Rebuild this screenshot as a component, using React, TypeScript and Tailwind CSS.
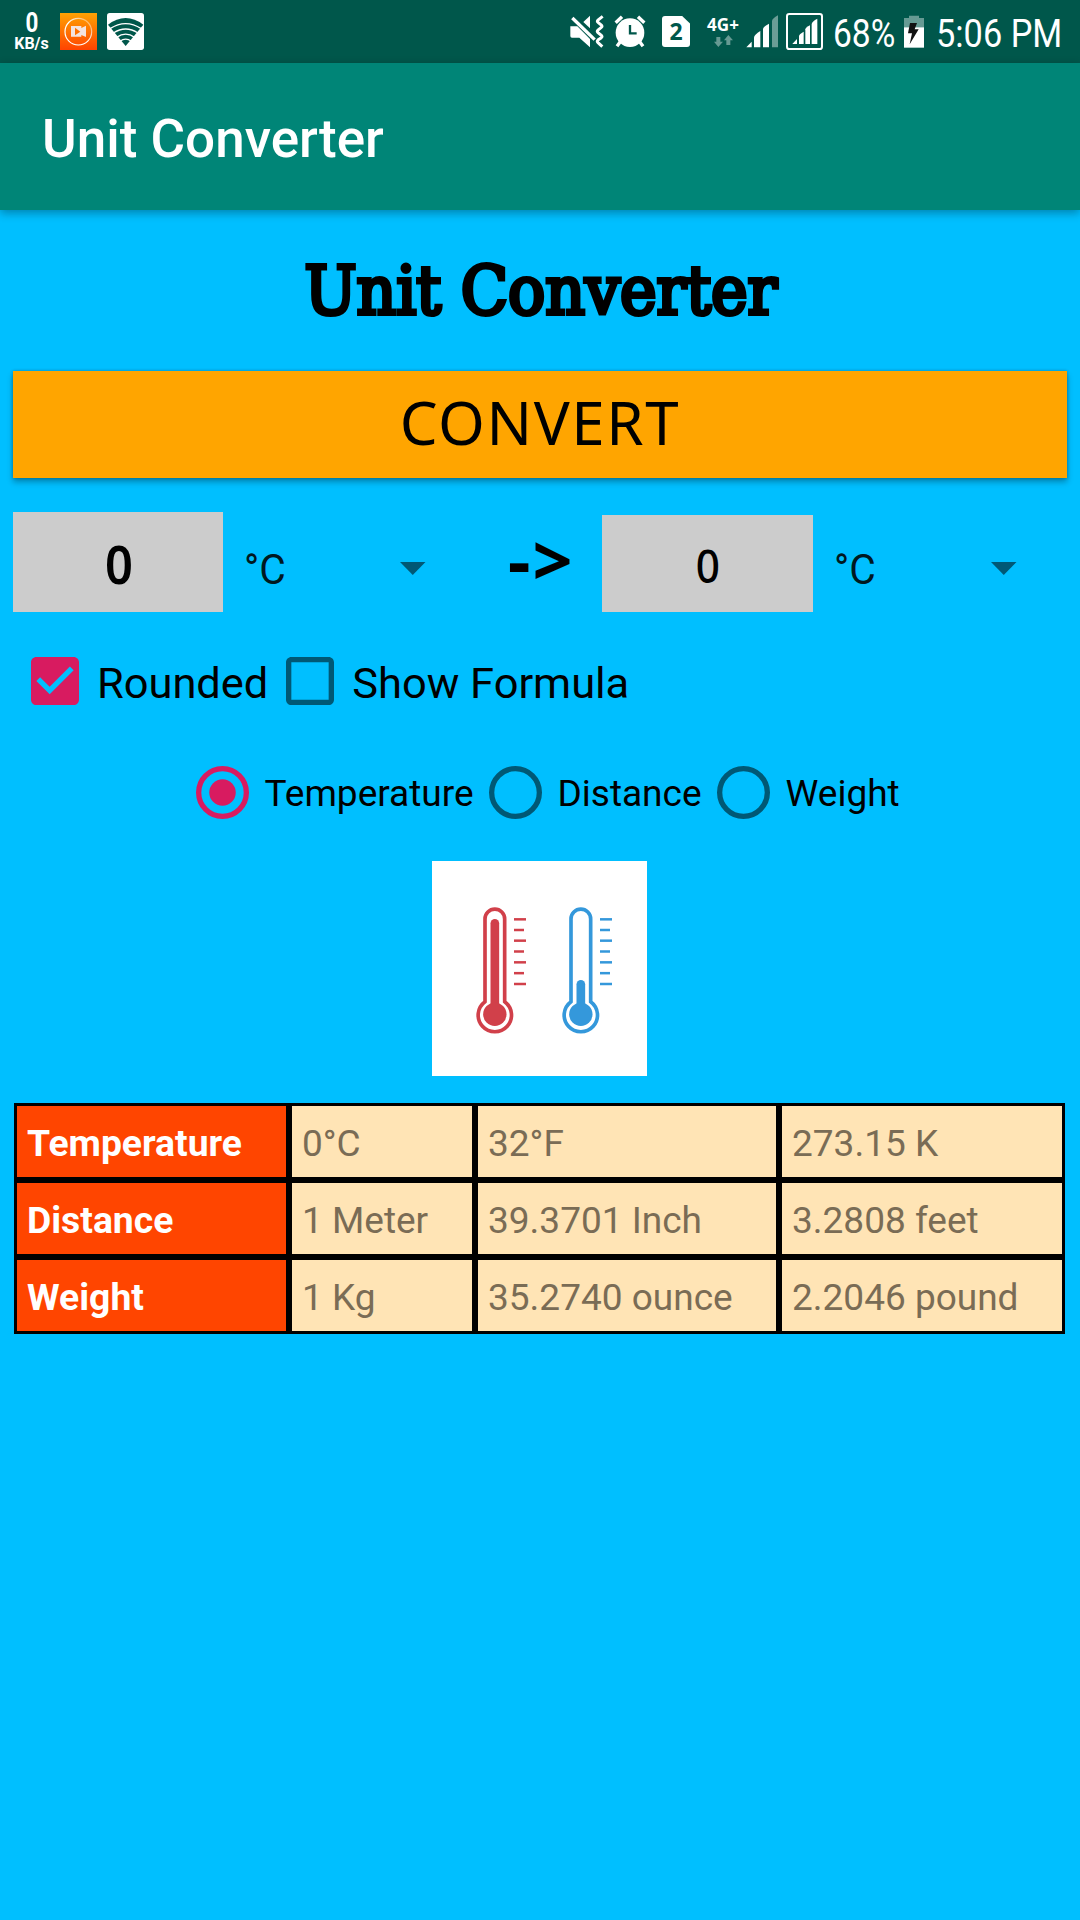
import type { ReactNode } from 'react';

function MuteIcon() {
  return (
    <svg className="h-[33px] w-[34px] shrink-0" viewBox="60 45 102 99">
      <path d="M100 66L120 47V85Z" fill="#fff" />
      <path d="M67 54L134 119" stroke="#fff" strokeWidth="10" />
      <path d="M61 79H82L120 117V142L88 113H66Q61 113 61 108Z" fill="#fff" />
      <path d="M158 49L144 60Q140 64 144 67L154 75Q158 79 154 82L144 90Q140 94 144 98L154 106Q158 110 154 113L144 120Q140 124 144 128L157 140" fill="none" stroke="#fff" strokeWidth="9" />
    </svg>
  );
}

function AlarmIcon() {
  return (
    <svg className="h-[33px] w-[32px] shrink-0" viewBox="192 45 96 99">
      <circle cx="240" cy="98" r="43" fill="#fff" />
      <path d="M240 75V100H260" fill="none" stroke="#00574B" strokeWidth="7" />
      <g stroke="#fff" strokeWidth="10">
        <path d="M197 68L216 50M283 68L264 50" />
        <path d="M212 124L201 139M268 124L279 139" />
      </g>
    </svg>
  );
}

function SignalIcon() {
  return (
    <svg className="h-[33px] w-[32px] shrink-0" viewBox="591 45 96 99" fill="#fff">
      <path d="M592 142L608 125V142Z" />
      <path d="M615 142V112Q616 104 634 93V142Z" />
      <path d="M642 142V86Q643 80 660 71V142Z" />
      <path d="M669 142V62Q670 56 687 46V142Z" opacity=".42" />
    </svg>
  );
}

function BoxedSignalIcon() {
  return (
    <svg className="h-[37px] w-[37px] shrink-0" viewBox="708 39 111 111" fill="#fff">
      <rect x="711" y="42" width="105" height="105" rx="7" fill="none" stroke="#fff" strokeWidth="6" />
      <path d="M727 132L741 117V132Z" />
      <path d="M747 132V108Q748 102 761 95V132Z" />
      <path d="M766 132V88Q767 82 780 76V132Z" />
      <path d="M785 132V72Q786 64 802 56V132Z" />
    </svg>
  );
}

function BatteryIcon() {
  return (
    <svg className="h-[33px] w-[20px] shrink-0" viewBox="283 45 60 99">
      <path d="M298 47H328V54H343V83H283V54H298Z" fill="#669A93" />
      <path d="M283 82H343V143H283Z" fill="#fff" />
      <path d="M301 69H322L315 88H327L300 133L307 100H295Z" fill="#111" />
    </svg>
  );
}

function RecorderIcon() {
  return (
    <svg className="h-[37px] w-[37px] shrink-0" viewBox="180 39 111 111">
      <defs>
        <linearGradient id="rec" x1="0" y1="0" x2="0" y2="1">
          <stop offset="0" stopColor="#FFA203" />
          <stop offset="1" stopColor="#FF4301" />
        </linearGradient>
        <linearGradient id="ring" x1="0" y1="1" x2="1" y2="0">
          <stop offset="0.5" stopColor="#fff" />
          <stop offset="1" stopColor="#fff" stopOpacity=".2" />
        </linearGradient>
      </defs>
      <rect x="180" y="39" width="111" height="111" fill="url(#rec)" />
      <circle cx="235" cy="95" r="40" fill="none" stroke="url(#ring)" strokeWidth="3.5" />
      <path d="M213 78H244V84L258 77V111L244 105V110H213Z" fill="#F3E3DF" />
      <path d="M225 83L241 95L225 106Z" fill="#FF7000" />
    </svg>
  );
}

function WifiIcon() {
  return (
    <svg className="h-[37px] w-[37px] shrink-0" viewBox="321 39 111 111">
      <rect x="321" y="39" width="111" height="111" rx="8" fill="#fff" />
      <path d="M377 138L324 74Q350 54 377 54T430 74Z" fill="#00574B" />
      <g fill="none" stroke="#fff" strokeWidth="4">
        <path d="M330 86Q377 56 424 86" />
        <path d="M340 99Q377 75 414 99" />
        <path d="M350 112Q377 93 404 112" />
        <path d="M360 124Q377 111 394 124" />
      </g>
    </svg>
  );
}

function StatusBar() {
  return (
    <div className="flex h-[63px] items-center bg-[#00574B] pl-[13px] text-white">
      <div className="flex w-[37px] flex-col items-center font-bold">
        <span className="scale-x-[.8] pl-px text-[28px] leading-[21px]">0</span>
        <span className="mt-[3px] text-[16px] leading-[16px]">KB/s</span>
      </div>
      <div className="ml-[10px] flex gap-[10px]">
        <RecorderIcon />
        <WifiIcon />
      </div>
      <div className="ml-[426px] flex items-center">
        <MuteIcon />
        <div className="ml-[10px] flex"><AlarmIcon /></div>
        <div className="ml-[16px] flex h-[31px] w-[28px] items-center justify-center rounded-[3px] bg-white pb-px font-['Noto_Sans',sans-serif] text-[23px] leading-none font-bold text-[#00574B] [clip-path:polygon(0_0,72%_0,100%_24%,100%_100%,0_100%)]">
          2
        </div>
        <div className="ml-[16px] flex w-[34px] flex-col items-center">
          <span className="font-['Noto_Sans',sans-serif] text-[17px] leading-[17px] font-bold">4G+</span>
          <svg className="mt-[2px] h-[12px] w-[19px]" viewBox="489 107 57 36" fill="#669A93">
            <path d="M496 113H508V127H516L502 143L489 127H496Z" />
            <path d="M526 137V123H519L532 107L546 123H538V137Z" />
          </svg>
        </div>
        <div className="ml-[6px] flex"><SignalIcon /></div>
        <div className="ml-[8px] flex"><BoxedSignalIcon /></div>
        <span className="ml-[10px] w-[71px] origin-left scale-x-[.86] pt-[4px] text-[39px] leading-[40px]">68%</span>
        <BatteryIcon />
        <span className="ml-[12px] origin-left scale-x-[.88] pt-[4px] text-[39px] leading-[40px] whitespace-nowrap">5:06 PM</span>
      </div>
    </div>
  );
}

function Arrow() {
  return (
    <svg className="mt-[13px] h-[13px] w-[26px] shrink-0" viewBox="0 0 26 13">
      <path d="M0 0H25.5L12.75 13Z" fill="#005875" />
    </svg>
  );
}

function Checkbox({ checked, children }: { checked?: boolean; children: ReactNode }) {
  return (
    <label className="flex items-center">
      <svg className="h-[48px] w-[48px]" viewBox="3 3 18 18" fill={checked ? '#D81B60' : '#005875'}>
        {checked ? (
          <path d="M19 3H5c-1.11 0-2 .9-2 2v14c0 1.1.89 2 2 2h14c1.11 0 2-.9 2-2V5c0-1.1-.89-2-2-2zm-9 14l-5-5 1.41-1.41L10 14.17l7.59-7.59L19 8l-9 9z" />
        ) : (
          <path d="M19 5v14H5V5h14m0-2H5c-1.1 0-2 .9-2 2v14c0 1.1.9 2 2 2h14c1.1 0 2-.9 2-2V5c0-1.1-.9-2-2-2z" />
        )}
      </svg>
      <span className="ml-[18px] pt-[6px] text-[43.4px] leading-[48px]">{children}</span>
    </label>
  );
}

function Radio({ checked, children }: { checked?: boolean; children: ReactNode }) {
  return (
    <label className="flex items-center">
      <svg className="h-[53px] w-[53px]" viewBox="0 0 20 20">
        <circle cx="10" cy="10" r="9" fill="none" strokeWidth="2" stroke={checked ? '#D81B60' : '#005875'} />
        {checked && <circle cx="10" cy="10" r="5" fill="#D81B60" />}
      </svg>
      <span className="ml-[16px] pt-[2px] text-[37px] leading-[50px]">{children}</span>
    </label>
  );
}

function Thermometer({ color, top }: { color: string; top: number }) {
  return (
    <g>
      <path d="M195 455V207a29.5 29.5 0 0 1 59 0V455A50 50 0 1 1 195 455Z" fill="none" stroke={color} strokeWidth="11" />
      <path d={`M224.5 ${top + 13}V480`} stroke={color} strokeWidth="26" strokeLinecap="round" />
      <circle cx="224.5" cy="493" r="35" fill={color} />
      {[208, 240, 272, 304.5, 337, 369.5, 402].map((y, i) => (
        <path key={y} d={`M282 ${y}H${i % 2 ? 312 : 318}`} stroke={color} strokeWidth="7.5" />
      ))}
    </g>
  );
}

const rows = [
  ['Temperature', '0°C', '32°F', '273.15 K'],
  ['Distance', '1 Meter', '39.3701 Inch', '3.2808 feet'],
  ['Weight', '1 Kg', '35.2740 ounce', '2.2046 pound'],
];

export default function App() {
  return (
    <div className="flex h-[1920px] w-[1080px] flex-col overflow-hidden bg-[#00BFFF] font-[Roboto,sans-serif] text-black">
      <StatusBar />
      <header className="z-10 flex h-[147px] items-center bg-[#008577] pt-[6px] pl-[42px] text-[53px] font-medium text-white shadow-[0_3px_9px_rgba(0,0,0,.32)]">
        Unit Converter
      </header>

      <div className="flex h-[161px] items-center justify-center">
        <h1 className="scale-x-[1.011] pt-px pl-px font-['DejaVu_Serif_Condensed','DejaVu_Serif',serif] text-[68px] leading-[80px] font-normal whitespace-nowrap [-webkit-text-stroke:4px_black]">
          Unit Converter
        </h1>
      </div>

      <button className="mx-[13px] flex h-[107px] items-center justify-center bg-[#FFA500] pb-[5px] font-['Noto_Sans',sans-serif] text-[60px] leading-none tracking-[1.6px] shadow-[0_4px_6px_rgba(0,0,0,.3),0_0_3px_rgba(0,0,0,.25)]">
        CONVERT
      </button>

      <div className="mt-[34px] flex h-[100px] pl-[13px]">
        <div className="flex w-[210px] items-center justify-center bg-[#CCCCCC] pt-[3px] pl-px font-['Noto_Sans',sans-serif] text-[52px] leading-none font-semibold">
          <span className="scale-x-[.94]">0</span>
        </div>
        <div className="ml-[21px] flex w-[182px] items-center justify-between">
          <span className="pt-[15px] text-[42px] leading-none text-[#001921]"><span className="inline-block origin-left scale-x-[.97]">°C</span></span>
          <Arrow />
        </div>
        <span className="ml-[82px] w-[94px] font-['Noto_Sans',sans-serif] text-[70px] leading-[94px] font-bold tracking-[2px]">-&gt;</span>
        <div className="mt-[3px] flex w-[211px] items-center justify-center bg-[#CCCCCC] pt-[4px] font-['Noto_Sans',sans-serif] text-[45px] leading-none font-medium">
          <span className="scale-x-[.94]">0</span>
        </div>
        <div className="ml-[21px] flex w-[183px] items-center justify-between">
          <span className="pt-[15px] text-[42px] leading-none text-[#001921]"><span className="inline-block origin-left scale-x-[.97]">°C</span></span>
          <Arrow />
        </div>
      </div>

      <div className="mt-[45px] flex h-[48px] items-center gap-[18px] pl-[31px]">
        <Checkbox checked>Rounded</Checkbox>
        <Checkbox>Show Formula</Checkbox>
      </div>

      <div className="mt-[61px] flex h-[53px] items-center gap-[15px] pl-[195.5px]">
        <Radio checked>Temperature</Radio>
        <Radio>Distance</Radio>
        <Radio>Weight</Radio>
      </div>

      <svg className="mt-[42px] ml-[432px] h-[215px] w-[215px] shrink-0 bg-white" viewBox="36 33 645 645">
        <Thermometer color="#D1404A" top={207} />
        <g transform="translate(258 0)">
          <Thermometer color="#3498DB" top={390} />
        </g>
      </svg>

      <div className="mt-[27px] ml-[14px] grid w-[1051px] grid-cols-[275px_186px_304px_286px] grid-rows-[77px_77px_77px] text-[37px]">
        {rows.flatMap((row) =>
          row.map((cell, i) => (
            <div
              key={cell}
              className={
                i === 0
                  ? 'flex items-center border-[3px] border-black bg-[#FF4500] pt-[4px] pl-[10px] text-[37.3px] font-bold text-white'
                  : 'flex items-center border-[3px] border-black bg-[#FFE4B5] pt-[4px] pl-[10px] text-[#7A6C55]'
              }
            >
              {cell}
            </div>
          )),
        )}
      </div>
    </div>
  );
}
